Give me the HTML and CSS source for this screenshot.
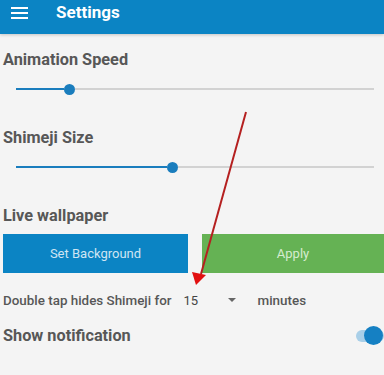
FILE: index.html
```html
<!DOCTYPE html>
<html lang="en">
<head>
    <meta charset="UTF-8">
    <meta name="viewport" content="width=device-width, initial-scale=1.0">
    <title>Settings</title>
    <link rel="stylesheet" href="styles.css">
</head>
<body>

    <div class="toolbar">
        <svg class="menu-icon" width="17" height="12" viewBox="0 0 17 12">
            <rect x="0" y="0" width="17" height="2" fill="#fff"/>
            <rect x="0" y="5" width="17" height="2" fill="#fff"/>
            <rect x="0" y="10" width="17" height="2" fill="#fff"/>
        </svg>
        <span class="toolbar-title">Settings</span>
    </div>

    <div class="content">
        <div class="label label-first">Animation Speed</div>
        <div class="slider">
            <div class="slider-fill" style="width: 48px"></div>
            <div class="slider-thumb"></div>
            <div class="slider-rest"></div>
        </div>

        <div class="label">Shimeji Size</div>
        <div class="slider">
            <div class="slider-fill" style="width: 151px"></div>
            <div class="slider-thumb"></div>
            <div class="slider-rest"></div>
        </div>

        <div class="label">Live wallpaper</div>
        <div class="buttons">
            <button class="btn btn-blue">Set Background</button>
            <button class="btn btn-green">Apply</button>
        </div>

        <div class="hide-row">
            <span class="hide-text">Double tap hides Shimeji for</span>
            <span class="spinner">
                <span class="spinner-value">15</span>
                <span class="spinner-arrow"></span>
            </span>
            <span class="hide-text">minutes</span>
        </div>

        <div class="notify-row">
            <span class="label label-inline">Show notification</span>
            <span class="switch">
                <span class="switch-track"></span>
                <span class="switch-thumb"></span>
            </span>
        </div>
    </div>

    <svg class="annotation" width="384" height="375" viewBox="0 0 384 375">
        <line x1="246" y1="112" x2="201" y2="274" stroke="#b52020" stroke-width="2"/>
        <polygon points="196,285 192,272 206,275" fill="#e21010"/>
    </svg>

</body>
</html>
```

FILE: styles.css
```css
body {
    font-family: Roboto, "Noto Sans", sans-serif;
    margin: 0;
    background: #f4f4f4;
    color: #575757;
    width: 384px;
    height: 375px;
    overflow: hidden;
    position: relative;
}

.toolbar {
    height: 34px;
    background: #0b84c4;
    display: flex;
    align-items: center;
    padding-left: 11px;
    box-shadow: 0 1px 3px rgba(0, 0, 0, 0.2);
}

.menu-icon {
    margin-top: -8px;
}

.toolbar-title {
    color: #fff;
    font-weight: bold;
    font-size: 17px;
    margin-left: 28px;
    margin-top: -10px;
}

.content {
    padding-left: 3px;
}

.label {
    font-weight: bold;
    font-size: 16.3px;
    line-height: 20px;
    margin-top: 33px;
}

.label-first {
    margin-top: 16px;
}

.slider {
    display: flex;
    align-items: center;
    margin: 13px 10px 0 13px;
    height: 12px;
}

.slider-fill {
    height: 2px;
    background: #1a7dbd;
}

.slider-thumb {
    width: 11px;
    height: 11px;
    border-radius: 50%;
    background: #1a7dbd;
}

.slider-rest {
    flex: 1;
    height: 2px;
    background: #d2d2d2;
}

.buttons {
    display: flex;
    margin-top: 8px;
}

.btn {
    font-family: Roboto, "Noto Sans", sans-serif;
    font-size: 13px;
    height: 39px;
    border: none;
    padding: 0;
}

.btn-blue {
    width: 185px;
    background: #0b84c4;
    color: #cfe5f3;
}

.btn-green {
    flex: 1;
    margin-left: 14px;
    background: #65b254;
    color: #d6ecd0;
}

.hide-row {
    display: flex;
    align-items: center;
    margin-top: 19px;
    height: 16px;
}

.hide-text {
    font-size: 13.4px;
    font-weight: 500;
}

.spinner {
    display: flex;
    align-items: center;
    margin-left: 12px;
    width: 74px;
}

.spinner-value {
    font-size: 13px;
    color: #444;
    width: 44px;
}

.spinner-arrow {
    width: 0;
    height: 0;
    border-left: 4px solid transparent;
    border-right: 4px solid transparent;
    border-top: 4px solid #666;
}

.notify-row {
    display: flex;
    align-items: center;
    justify-content: space-between;
    margin-top: 18px;
}

.label-inline {
    margin-top: 0;
}

.switch {
    position: relative;
    width: 28px;
    height: 20px;
}

.switch-track {
    position: absolute;
    left: 0;
    top: 4px;
    width: 28px;
    height: 12px;
    border-radius: 6px;
    background: #a9cfe8;
}

.switch-thumb {
    position: absolute;
    right: 1px;
    top: 0;
    width: 19px;
    height: 19px;
    border-radius: 50%;
    background: #1580c3;
}

.annotation {
    position: absolute;
    top: 0;
    left: 0;
    pointer-events: none;
}
```
